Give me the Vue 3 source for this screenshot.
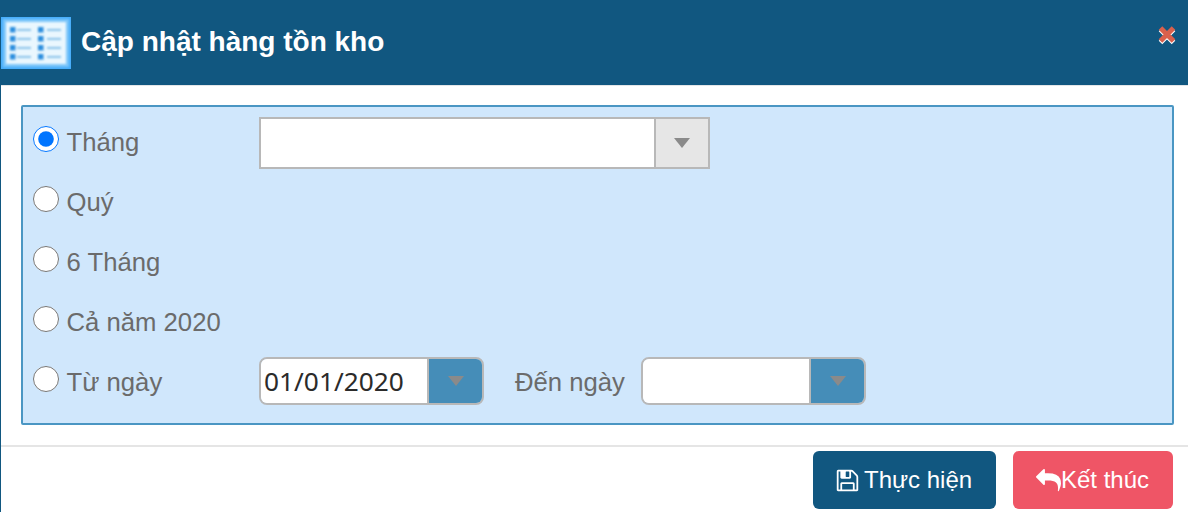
<script setup>
const plainRows = ['Quý', '6 Tháng', 'Cả năm 2020']
</script>

<template>
  <div class="dialog">
    <header class="head">
      <svg class="logo" width="70" height="52" viewBox="0 0 70 52">
        <defs>
          <filter id="soft" x="-10%" y="-10%" width="120%" height="120%">
            <feGaussianBlur stdDeviation="0.8" />
          </filter>
          <filter id="softer" x="-10%" y="-10%" width="120%" height="120%">
            <feGaussianBlur stdDeviation="1.2" />
          </filter>
        </defs>
        <rect width="70" height="52" fill="#45acfa" />
        <rect x="2" y="2" width="66" height="48" fill="#7cc6fa" filter="url(#soft)" />
        <rect x="5" y="5" width="60" height="42" fill="#eaf7fe" filter="url(#softer)" />
        <g filter="url(#soft)">
          <g v-for="y in [13, 22, 31, 40]" :key="y">
            <rect x="9" :y="y - 3" width="5.500" height="5.500" fill="#2a8ede" />
            <rect x="16" :y="y - 1" width="14" height="1.800" fill="#7fbde8" />
            <rect x="37" :y="y - 3" width="5.500" height="5.500" fill="#2a8ede" />
            <rect x="46" :y="y - 1" width="14" height="1.800" fill="#7fbde8" />
          </g>
        </g>
      </svg>
      <h1 class="title">Cập nhật hàng tồn kho</h1>
      <svg class="close" width="20" height="20" viewBox="0 0 20 20">
        <path d="M3.500 4.500 L16.500 17.500 M16.500 4.500 L3.500 17.500" stroke="#ffffff" stroke-width="5" />
        <path d="M3.500 3 L16.500 16 M16.500 3 L3.500 16" stroke="#d9604c" stroke-width="5" />
      </svg>
    </header>

    <main class="body">
      <section class="panel">
        <div class="row">
          <label class="choice">
            <input class="radio" type="radio" name="period" checked />
            <span>Tháng</span>
          </label>
          <div class="select">
            <div class="select-value"></div>
            <div class="select-arrow"><i class="caret"></i></div>
          </div>
        </div>

        <div v-for="text in plainRows" :key="text" class="row">
          <label class="choice">
            <input class="radio" type="radio" name="period" />
            <span>{{ text }}</span>
          </label>
        </div>

        <div class="row">
          <label class="choice">
            <input class="radio" type="radio" name="period" />
            <span>Từ ngày</span>
          </label>
          <div class="date">
            <div class="date-value">01/01/2020</div>
            <div class="date-arrow"><i class="caret"></i></div>
          </div>
          <span class="to-label">Đến ngày</span>
          <div class="date">
            <div class="date-value"></div>
            <div class="date-arrow"><i class="caret"></i></div>
          </div>
        </div>
      </section>
    </main>

    <footer class="foot">
      <button class="btn btn-save" type="button">
        <svg width="25" height="25" viewBox="0 0 1792 1792" fill="currentColor">
          <path d="M512 1536h768v-384h-768v384zm896 0h128v-896q0-14-10-38.500t-20-34.500l-281-281q-10-10-34-20t-39-10v416q0 40-28 68t-68 28h-576q-40 0-68-28t-28-68v-416h-128v1280h128v-416q0-40 28-68t68-28h832q40 0 68 28t28 68v416zm-384-928v-320q0-13-9.500-22.500t-22.500-9.500h-192q-13 0-22.500 9.500t-9.500 22.500v320q0 13 9.500 22.500t22.500 9.500h192q13 0 22.500-9.500t9.500-22.500zm640 32v928q0 40-28 68t-68 28h-1344q-40 0-68-28t-28-68v-1344q0-40 28-68t68-28h928q40 0 88 20t76 48l280 280q28 28 48 76t20 88z" />
        </svg>
        <span>Thực hiện</span>
      </button>
      <button class="btn btn-exit" type="button">
        <svg width="25" height="25" viewBox="0 0 1792 1792" fill="currentColor">
          <path d="M1792 1120q0 166-127 451-3 7-10.500 24t-13.500 30-13 22q-12 17-28 17-15 0-23.500-10t-8.500-25q0-9 2.500-26.500t2.500-23.500q5-68 5-123 0-101-17.500-181t-48.500-138.500-80-101-105.500-69.500-133-42.500-154-21.500-175.500-6h-224v256q0 26-19 45t-45 19-45-19l-512-512q-19-19-19-45t19-45l512-512q19-19 45-19t45 19 19 45v256h224q713 0 875 403 53 134 53 333z" />
        </svg>
        <span>Kết thúc</span>
      </button>
    </footer>
  </div>
</template>

<style>
html, body {
  margin: 0;
  background: #fff;
}
</style>

<style scoped>
.dialog {
  width: 1188px;
  height: 512px;
  box-sizing: border-box;
  border-left: 1px solid #115780;
  display: flex;
  flex-direction: column;
  font-family: "Liberation Sans", Arial, sans-serif;
  overflow: hidden;
  background: #fff;
}
.head {
  margin-left: -1px;
  height: 85px;
  flex: none;
  background: #115780;
  display: flex;
  align-items: center;
  border-bottom: 1px solid #e3e6e8;
  box-sizing: content-box;
  padding-left: 1px;
  padding-right: 11px;
}
.logo {
  flex: none;
  margin-top: 1px;
}
.title {
  margin: 0 0 2px 10px;
  font-size: 28px;
  font-weight: 700;
  color: #fff;
  flex: 1;
}
.close {
  flex: none;
  margin-bottom: 16px;
}
.body {
  flex: none;
  height: 361px;
  box-sizing: border-box;
  padding: 19px 14px 0 20px;
  border-bottom: 2px solid #e5e5e5;
}
.panel {
  height: 320px;
  box-sizing: border-box;
  border: 2px solid #4a96c3;
  border-radius: 2px;
  background: #d0e7fc;
  padding: 5px 0 11px 10px;
}
.row {
  height: 60px;
  display: flex;
  align-items: center;
}
.choice {
  width: 226px;
  flex: none;
  display: flex;
  align-items: center;
  font-size: 25.700px;
  color: #6b6b6b;
}
.radio {
  width: 26px;
  height: 26px;
  margin: -6px 7.500px 0 0;
  flex: none;
}
.select {
  width: 451px;
  height: 52px;
  box-sizing: border-box;
  border: 2px solid #b8b8b8;
  display: flex;
  margin-top: 2px;
}
.select-value {
  flex: 1;
  background: #fff;
}
.select-arrow {
  width: 54px;
  flex: none;
  box-sizing: border-box;
  border-left: 2px solid #b8b8b8;
  background: #e6e6e6;
  display: flex;
  align-items: center;
  justify-content: center;
}
.caret {
  width: 0;
  height: 0;
  border-left: 8px solid transparent;
  border-right: 8px solid transparent;
  border-top: 10px solid #8a8a8a;
}
.date {
  width: 225px;
  height: 48px;
  box-sizing: border-box;
  border: 2px solid #b8b8b8;
  border-radius: 8px;
  display: flex;
  overflow: hidden;
  margin-top: -3px;
}
.date-value {
  flex: 1;
  background: #fff;
  font-family: "Noto Sans", "Open Sans", sans-serif;
  font-size: 26.300px;
  line-height: 44px;
  color: #2b2b2b;
  padding-left: 3px;
}
.date-arrow {
  width: 55px;
  flex: none;
  box-sizing: border-box;
  border-left: 2px solid #b8b8b8;
  background: #458db8;
  display: flex;
  align-items: center;
  justify-content: center;
}
.to-label {
  font-size: 25.700px;
  color: #6b6b6b;
  margin-left: 31px;
  width: 126px;
  flex: none;
}
.foot {
  flex: none;
  display: flex;
  justify-content: flex-end;
  gap: 17px;
  padding: 4px 15px 0 0;
}
.btn {
  height: 58px;
  border: 0;
  border-radius: 6px;
  color: #fff;
  font-family: inherit;
  font-size: 24px;
  display: flex;
  align-items: center;
  padding: 0;
}
.btn-save {
  width: 183px;
  background: #115780;
  gap: 4px;
  padding-left: 22px;
}
.btn-exit {
  width: 160px;
  background: #ef5566;
  padding-left: 23px;
}
</style>
